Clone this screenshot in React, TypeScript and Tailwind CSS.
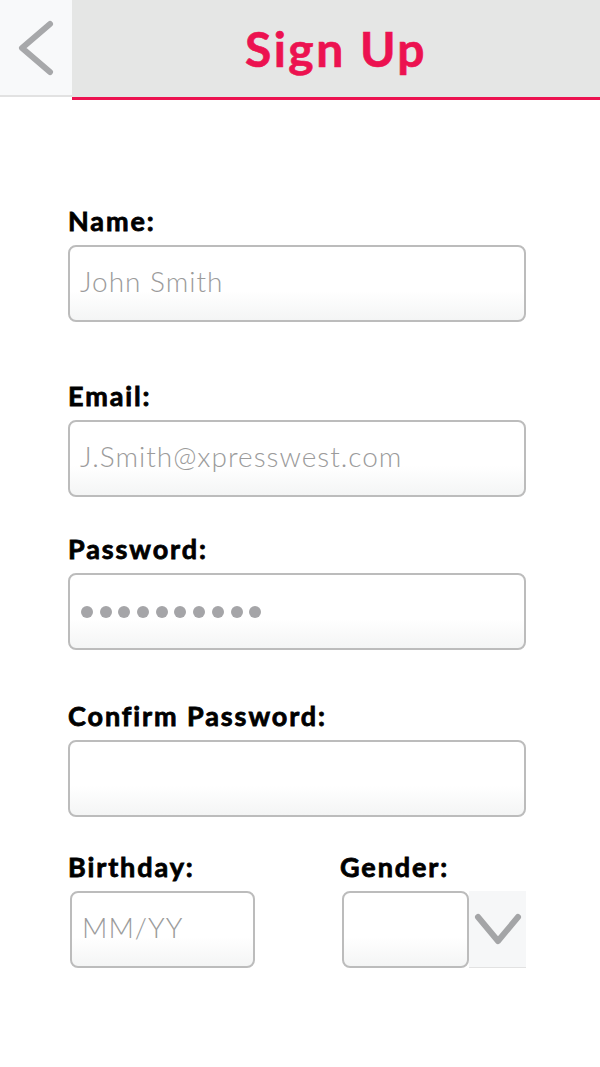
import React from 'react';

const font = { fontFamily: '"Lato", "Noto Sans", sans-serif' };

const BackIcon = () => (
  <svg width="40" height="60" viewBox="0 0 40 60" fill="none">
    <path d="M34 6 L6 30 L34 54" stroke="#a7a8aa" strokeWidth="6" strokeLinecap="round" strokeLinejoin="round" />
  </svg>
);

const ChevronDown = () => (
  <svg width="50" height="36" viewBox="0 0 50 36" fill="none">
    <path d="M5 6 L25 30 L45 6" stroke="#a4a5a7" strokeWidth="6" strokeLinecap="round" strokeLinejoin="round" />
  </svg>
);

interface FieldProps {
  label: string;
  placeholder?: string;
  dots?: number;
  className?: string;
}

const Box: React.FC<{ children?: React.ReactNode; className?: string }> = ({ children, className = '' }) => (
  <div
    className={`h-[77px] flex items-center rounded-[8px] border-2 border-[#bcbcbc] bg-gradient-to-b from-white from-60% to-[#f4f5f5] ${className}`}
  >
    {children}
  </div>
);

const Label: React.FC<{ children: React.ReactNode }> = ({ children }) => (
  <label className="block pt-[2px] text-[27px] leading-8 font-bold text-black tracking-[1.9px] [-webkit-text-stroke:0.8px_black]">
    {children}
  </label>
);

const Placeholder: React.FC<{ children: React.ReactNode }> = ({ children }) => (
  <span className="text-[28px] font-light text-[#9b9b9b] tracking-[1px] -mt-[6px]">{children}</span>
);

const Field: React.FC<FieldProps> = ({ label, placeholder, dots, className = '' }) => (
  <div className={className}>
    <Label>{label}</Label>
    <Box className="mt-[8px] px-[10px]">
      {placeholder && <Placeholder>{placeholder}</Placeholder>}
      {dots && (
        <div className="flex gap-[6.7px] pl-[1px]">
          {Array.from({ length: dots }).map((_, i) => (
            <span key={i} className="w-[12px] h-[12px] rounded-full bg-[#a5a5a8]" />
          ))}
        </div>
      )}
    </Box>
  </div>
);

export default function App() {
  return (
    <div className="w-[600px] h-[1067px] bg-white" style={font}>
      <header className="flex h-[100px]">
        <button className="w-[72px] h-[97px] flex items-center justify-center bg-[#f8f9fa] border-b-2 border-[#e2e2e2]">
          <BackIcon />
        </button>
        <div className="flex-1 h-[100px] bg-[#e5e6e5] border-b-[3px] border-[#ec1250] flex items-center justify-center">
          <h1 className="text-[48px] font-bold text-[#ec1250] tracking-[2.5px] [-webkit-text-stroke:0.6px_#ec1250]">Sign Up</h1>
        </div>
      </header>

      <main className="pl-[68px] w-[526px]">
        <Field label="Name:" placeholder="John Smith" className="mt-[103px]" />
        <Field label="Email:" placeholder="J.Smith@xpresswest.com" className="mt-[56px]" />
        <Field label="Password:" dots={10} className="mt-[34px]" />
        <Field label="Confirm Password:" className="mt-[48px]" />

        <div className="flex mt-[32px]">
          <div className="w-[272px]">
            <Label>Birthday:</Label>
            <Box className="mt-[8px] ml-[2px] w-[185px] px-[10px]">
              <Placeholder>MM/YY</Placeholder>
            </Box>
          </div>
          <div className="flex-1">
            <Label>Gender:</Label>
            <div className="mt-[8px] ml-[2px] flex">
              <Box className="w-[127px]" />
              <div className="flex-1 h-[77px] bg-[#f6f7f8] border-b border-[#e2e2e2] flex items-center justify-center">
                <ChevronDown />
              </div>
            </div>
          </div>
        </div>
      </main>
    </div>
  );
}
